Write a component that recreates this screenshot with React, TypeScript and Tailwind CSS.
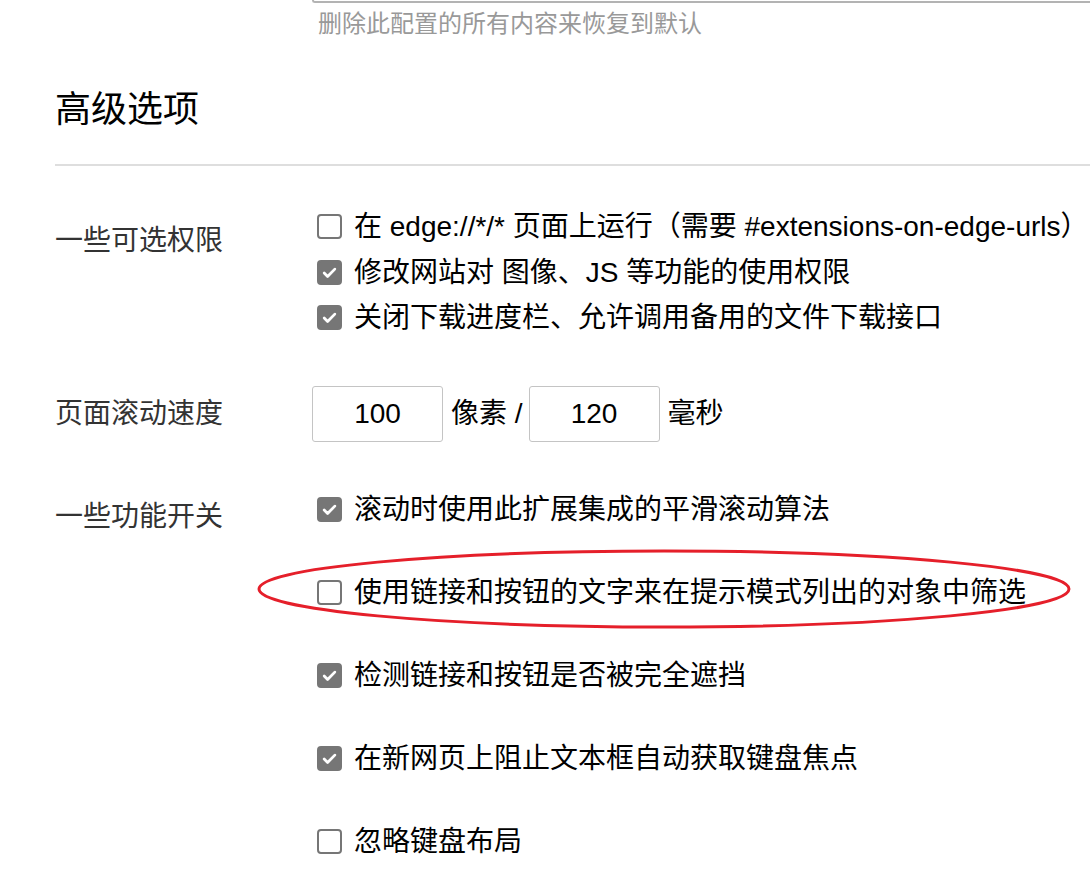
import type { ReactNode } from 'react';

function Box({ checked }: { checked: boolean }) {
  return (
    <span
      className={
        'ml-[5px] w-[25px] h-[25px] shrink-0 rounded-[4px] border-2 border-[#767676] flex items-center justify-center ' +
        (checked ? 'bg-[#767676]' : 'bg-white')
      }
    >
      {checked && (
        <svg width="17" height="17" viewBox="0 0 16 16" fill="none">
          <path d="M3 8.5l3.2 3.2L13 4.8" stroke="white" strokeWidth="2.6" strokeLinecap="round" strokeLinejoin="round" />
        </svg>
      )}
    </span>
  );
}

function Check({ checked, children }: { checked: boolean; children: ReactNode }) {
  return (
    <div className="flex items-center h-[45.5px] gap-[12px] whitespace-nowrap">
      <Box checked={checked} />
      <span className="leading-[45px]">{children}</span>
    </div>
  );
}

function NumInput({ value }: { value: string }) {
  return (
    <div className="w-[131px] h-[56px] border border-[#c4c4c4] rounded-[3px] flex items-center justify-center text-black">
      {value}
    </div>
  );
}

export default function App() {
  return (
    <div
      className="relative min-h-[889px] bg-white overflow-hidden text-black"
      style={{ fontFamily: '"Liberation Sans", "Noto Sans CJK SC", sans-serif' }}
    >
      {/* bottom of the textarea above */}
      <div className="ml-[312px] h-[3px] border-l-2 border-b-2 border-[#b3b3b3] rounded-bl-[4px]" />
      <div className="ml-[318px] mt-[5px] text-[24px] leading-[32px] text-[#999] whitespace-nowrap">
        删除此配置的所有内容来恢复到默认
      </div>

      <div className="pl-[55px]">
        <h2 className="mt-[46px] text-[36px] leading-[48px] text-black">高级选项</h2>
        <div className="mt-[30px] h-[2px] bg-[#dedede]" />

        {/* permissions */}
        <div className="mt-[38px] flex text-[28px]">
          <div className="w-[257px] shrink-0 pt-[14px] leading-[45px] text-[#333]">一些可选权限</div>
          <div>
            <Check checked={false}>在 edge://*/* 页面上运行（需要 #extensions-on-edge-urls）</Check>
            <Check checked>修改网站对 图像、JS 等功能的使用权限</Check>
            <Check checked>关闭下载进度栏、允许调用备用的文件下载接口</Check>
          </div>
        </div>

        {/* scroll speed */}
        <div className="mt-[45px] flex items-center text-[28px]">
          <div className="w-[257px] shrink-0 leading-[45px] text-[#333]">页面滚动速度</div>
          <NumInput value="100" />
          <span className="ml-[8px] mr-[6px] whitespace-nowrap">像素 /</span>
          <NumInput value="120" />
          <span className="ml-[8px]">毫秒</span>
        </div>

        {/* switches */}
        <div className="mt-[45px] flex text-[28px]">
          <div className="w-[257px] shrink-0 pt-[7px] leading-[45px] text-[#333]">一些功能开关</div>
          <div className="flex flex-col gap-[37.5px]">
            <Check checked>滚动时使用此扩展集成的平滑滚动算法</Check>
            <Check checked={false}>使用链接和按钮的文字来在提示模式列出的对象中筛选</Check>
            <Check checked>检测链接和按钮是否被完全遮挡</Check>
            <Check checked>在新网页上阻止文本框自动获取键盘焦点</Check>
            <Check checked={false}>忽略键盘布局</Check>
          </div>
        </div>
      </div>

      {/* red annotation ellipse */}
      <svg className="absolute left-[256px] top-[548px] pointer-events-none" width="816" height="82" viewBox="0 0 816 82">
        <ellipse cx="408" cy="41" rx="405" ry="38" fill="none" stroke="#e51f2a" strokeWidth="3" />
      </svg>
    </div>
  );
}
